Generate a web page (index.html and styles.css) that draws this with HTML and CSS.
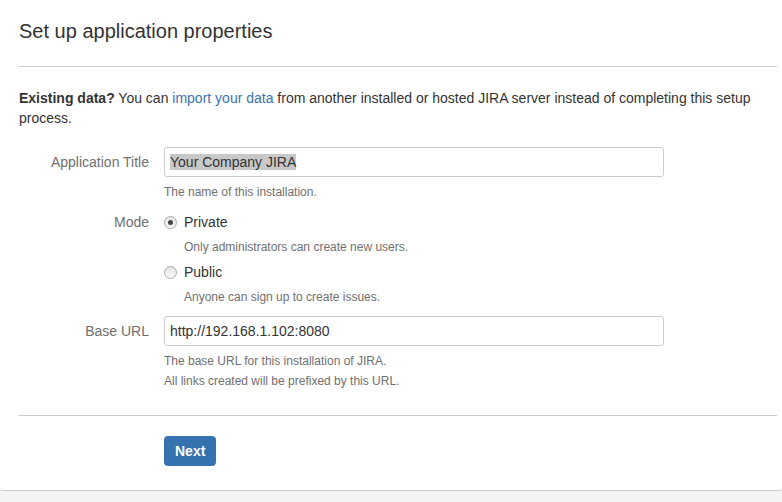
FILE: index.html
```html
<!DOCTYPE html>
<html>
<head>
<meta charset="utf-8">
<link rel="stylesheet" href="styles.css">
</head>
<body>
<div class="card">
  <h2 class="title">Set up application properties</h2>
  <hr class="rule">
  <p class="intro"><strong>Existing data?</strong> You can <a href="#" class="link">import your data</a> from another installed or hosted JIRA server instead of completing this setup process.</p>
  <form class="form">
    <div class="group">
      <label class="label">Application Title</label>
      <div class="field">
        <div class="text-input"><span class="selected">Your Company JIRA</span></div>
        <div class="description">The name of this installation.</div>
      </div>
    </div>
    <div class="group group-mode">
      <div class="label label-plain">Mode</div>
      <div class="field">
        <div class="radio-row">
          <span class="radio checked"></span><span class="radio-label">Private</span>
        </div>
        <div class="description indent">Only administrators can create new users.</div>
        <div class="radio-row second">
          <span class="radio"></span><span class="radio-label">Public</span>
        </div>
        <div class="description indent">Anyone can sign up to create issues.</div>
      </div>
    </div>
    <div class="group">
      <label class="label">Base URL</label>
      <div class="field">
        <div class="text-input">http://192.168.1.102:8080</div>
        <div class="description">The base URL for this installation of JIRA.<br>All links created will be prefixed by this URL.</div>
      </div>
    </div>
    <hr class="rule rule-bottom">
    <div class="buttons">
      <button type="button" class="button">Next</button>
    </div>
  </form>
</div>
</body>
</html>
```

FILE: styles.css
```css
html, body {
  margin: 0;
  padding: 0;
}
body {
  background: #f4f4f4;
  font-family: "Liberation Sans", Arial, sans-serif;
  font-size: 14px;
  line-height: 20px;
  color: #333;
  height: 502px;
  overflow: hidden;
}
.card {
  background: #fff;
  height: 491px;
  box-sizing: border-box;
  border-bottom: 1px solid #ccc;
  border-radius: 0 0 3px 3px;
  padding: 16px 5px 0 19px;
}
.title {
  margin: 0;
  font-size: 20px;
  line-height: 30px;
  font-weight: normal;
  color: #333;
}
.rule {
  border: 0;
  border-top: 1px solid #ccc;
  margin: 20px 0 0 0;
  height: 0;
}
.intro {
  margin: 21px 0 0 0;
}
.link {
  color: #3b73af;
  text-decoration: none;
}
.form {
  margin: 15px 0 0 0;
}
.group {
  display: grid;
  grid-template-columns: 130px 500px;
  column-gap: 15px;
  padding: 4px 0;
}
.group-mode {
  padding-bottom: 5px;
}
.label {
  text-align: right;
  color: #707070;
  padding-top: 5px;
}
.text-input {
  box-sizing: border-box;
  height: 30px;
  border: 1px solid #ccc;
  border-radius: 3px;
  padding: 4px 5px;
  line-height: 20px;
  color: #333;
}
.selected {
  background: #c8c8c8;
}
.description {
  margin-top: 5px;
  font-size: 12px;
  line-height: 20px;
  color: #707070;
}
.indent {
  margin-left: 20px;
  margin-top: 5px;
}
.radio-row {
  display: flex;
  align-items: center;
  height: 20px;
  margin-top: 2px;
}
.radio-row.second {
  margin-top: 5px;
}
.label-plain {
  padding-top: 2px;
}
.radio {
  box-sizing: border-box;
  width: 13px;
  height: 13px;
  border-radius: 50%;
  border: 1px solid #a9a9a9;
  background: linear-gradient(#e6e6e6, #f7f7f7);
  margin-right: 7px;
  position: relative;
}
.radio.checked::after {
  content: "";
  position: absolute;
  left: 3px;
  top: 3px;
  width: 5px;
  height: 5px;
  border-radius: 50%;
  background: #444;
}
.radio-label {
  color: #333;
}
.rule-bottom {
  margin-top: 20px;
}
.buttons {
  padding: 20px 0 0 145px;
}
.button {
  font-family: "Liberation Sans", Arial, sans-serif;
  font-size: 14px;
  font-weight: bold;
  color: #fff;
  background: #3572b0;
  border: 1px solid #3572b0;
  border-radius: 3.5px;
  height: 30px;
  padding: 0 10px;
  line-height: 20px;
  cursor: pointer;
}
```
